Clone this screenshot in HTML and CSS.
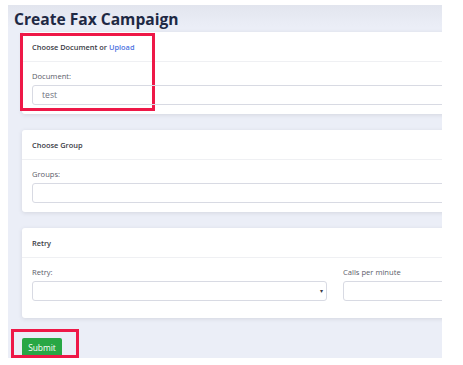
FILE: index.html
```html
<!DOCTYPE html>
<html lang="en">
<head>
  <meta charset="utf-8">
  <title>Create Fax Campaign</title>
  <link rel="stylesheet" href="styles.css">
</head>
<body>
  <div class="page">
    <div class="content">
      <h1 class="page-title">Create Fax Campaign</h1>

      <div class="card">
        <span class="mark mark-doc"></span>
        <div class="card-header">Choose Document or <a href="#">Upload</a></div>
        <div class="card-body">
          <label class="field-label">Document:</label>
          <div class="field">test</div>
        </div>
      </div>

      <div class="card">
        <div class="card-header">Choose Group</div>
        <div class="card-body">
          <label class="field-label">Groups:</label>
          <div class="field"></div>
        </div>
      </div>

      <div class="card">
        <div class="card-header">Retry</div>
        <div class="card-body card-body-tall">
          <div class="row">
            <div>
              <label class="field-label">Retry:</label>
              <div class="field field-select"><span class="caret">&#9662;</span></div>
            </div>
            <div>
              <label class="field-label">Calls per minute</label>
              <div class="field"></div>
            </div>
          </div>
        </div>
      </div>

      <div class="actions">
        <button class="btn-submit" type="button">Submit</button>
        <span class="mark mark-submit"></span>
      </div>
    </div>
  </div>
</body>
</html>
```

FILE: styles.css
```css
*, *::before, *::after {
  margin: 0;
  padding: 0;
  box-sizing: border-box;
}

body {
  background-color: #FFFFFF;
  font-family: "Open Sans", "Noto Sans", sans-serif;
  color: #5a5c69;
}

.page {
  padding: 5px 21px 7px 8px;
}

.content {
  height: 353px;
  padding: 4px 0 0 14px;
  background: linear-gradient(#e2e5ee, #ebeef7 22px);
  overflow: hidden;
}

.page-title {
  margin-left: -8px;
  color: #1e2944;
  font-size: 15.6px;
  font-weight: 700;
  line-height: 20px;
}

.card {
  position: relative;
  margin: 3px -40px 16px 0;
  background-color: #FFFFFF;
  border-radius: 3px;
  box-shadow: 0 1px 4px rgba(58, 59, 69, 0.13);
}

.card + .card {
  margin-top: 0;
}

.card-header {
  height: 30px;
  padding-left: 10px;
  border-bottom: 1px solid #eff0f3;
  color: #3a3b45;
  font-size: 7.4px;
  font-weight: 600;
  line-height: 30px;
}

.card-header a {
  color: #4e73df;
  text-decoration: none;
}

.card-body {
  padding: 9px 10px 9px 10px;
}

.card-body-tall {
  padding-bottom: 17px;
}

.field-label {
  display: block;
  margin-bottom: 4px;
  font-size: 7.6px;
  line-height: 10px;
}

.field {
  position: relative;
  height: 20px;
  padding-left: 9px;
  border: 1px solid #d8dae3;
  border-radius: 3px;
  color: #6e707e;
  font-size: 8.6px;
  line-height: 18px;
}

.row {
  display: grid;
  grid-template-columns: 295px 1fr;
  column-gap: 16px;
}

.caret {
  position: absolute;
  right: 3px;
  top: 0;
  font-size: 6px;
  color: #3a3b45;
}

.actions {
  position: relative;
}

.btn-submit {
  width: 40px;
  height: 20px;
  border: none;
  border-radius: 2px;
  background-color: #28a745;
  color: #FFFFFF;
  font-family: inherit;
  font-size: 8.4px;
}

.mark {
  position: absolute;
  border: 3px solid #ee1847;
  pointer-events: none;
}

.mark-doc {
  left: -2px;
  top: 1px;
  width: 135px;
  height: 78px;
}

.mark-submit {
  left: -11px;
  top: -5px;
  width: 68px;
  height: 29px;
}
```
